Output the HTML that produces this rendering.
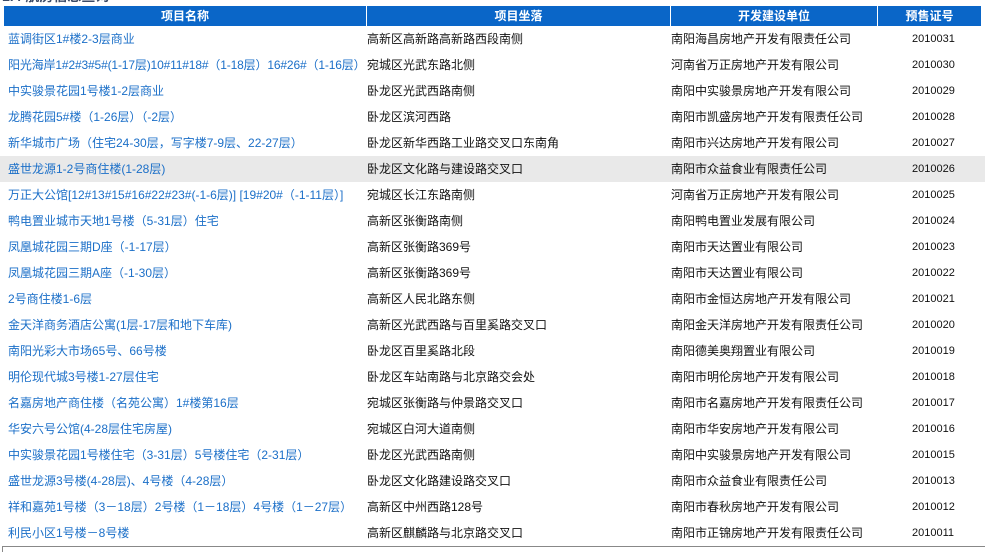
<!DOCTYPE html>
<html><head><meta charset="utf-8"><style>
body{margin:0;width:985px;height:558px;background:#fff;overflow:hidden;position:relative;font-family:"Liberation Sans","Noto Sans CJK SC","WenQuanYi Zen Hei",sans-serif;font-size:12px}
.t{position:absolute;left:0;top:-11px;font-size:14px;font-weight:bold;color:#3b4a66;line-height:14px;padding-left:2px}
.h{position:absolute;top:6px;height:20px;background:#0a66c8;color:#fff;font-weight:bold;font-size:12px;line-height:20px;text-align:center}
.r{position:absolute;left:0;width:985px;height:26px;line-height:26px;white-space:nowrap}
.r div{position:absolute;top:0}
.c1{left:8px;color:#1b6fc8}
.c2{left:367px;color:#111}
.c3{left:671px;color:#111}
.c4{left:912px;color:#111;font-size:11px}
.g{background:#e9e9e9}
</style></head><body>
<div class="t">1.4 航房信息查询</div>
<div class="h" style="left:4px;width:362px">项目名称</div>
<div class="h" style="left:367px;width:303px">项目坐落</div>
<div class="h" style="left:671px;width:206px">开发建设单位</div>
<div class="h" style="left:878px;width:103px">预售证号</div>

<div class="r" style="top:26px"><div class="c1">蓝调街区1#楼2-3层商业</div><div class="c2">高新区高新路高新路西段南侧</div><div class="c3">南阳海昌房地产开发有限责任公司</div><div class="c4">2010031</div></div>
<div class="r" style="top:52px"><div class="c1" style="letter-spacing:-0.15px">阳光海岸1#2#3#5#(1-17层)10#11#18#（1-18层）16#26#（1-16层）</div><div class="c2">宛城区光武东路北侧</div><div class="c3">河南省万正房地产开发有限公司</div><div class="c4">2010030</div></div>
<div class="r" style="top:78px"><div class="c1">中实骏景花园1号楼1-2层商业</div><div class="c2">卧龙区光武西路南侧</div><div class="c3">南阳中实骏景房地产开发有限公司</div><div class="c4">2010029</div></div>
<div class="r" style="top:104px"><div class="c1">龙腾花园5#楼（1-26层）（-2层）</div><div class="c2">卧龙区滨河西路</div><div class="c3">南阳市凯盛房地产开发有限责任公司</div><div class="c4">2010028</div></div>
<div class="r" style="top:130px"><div class="c1">新华城市广场（住宅24-30层，写字楼7-9层、22-27层）</div><div class="c2">卧龙区新华西路工业路交叉口东南角</div><div class="c3">南阳市兴达房地产开发有限公司</div><div class="c4">2010027</div></div>
<div class="r g" style="top:156px"><div class="c1">盛世龙源1-2号商住楼(1-28层)</div><div class="c2">卧龙区文化路与建设路交叉口</div><div class="c3">南阳市众益食业有限责任公司</div><div class="c4">2010026</div></div>
<div class="r" style="top:182px"><div class="c1">万正大公馆[12#13#15#16#22#23#(-1-6层)] [19#20#（-1-11层）]</div><div class="c2">宛城区长江东路南侧</div><div class="c3">河南省万正房地产开发有限公司</div><div class="c4">2010025</div></div>
<div class="r" style="top:208px"><div class="c1">鸭电置业城市天地1号楼（5-31层）住宅</div><div class="c2">高新区张衡路南侧</div><div class="c3">南阳鸭电置业发展有限公司</div><div class="c4">2010024</div></div>
<div class="r" style="top:234px"><div class="c1">凤凰城花园三期D座（-1-17层）</div><div class="c2">高新区张衡路369号</div><div class="c3">南阳市天达置业有限公司</div><div class="c4">2010023</div></div>
<div class="r" style="top:260px"><div class="c1">凤凰城花园三期A座（-1-30层）</div><div class="c2">高新区张衡路369号</div><div class="c3">南阳市天达置业有限公司</div><div class="c4">2010022</div></div>
<div class="r" style="top:286px"><div class="c1">2号商住楼1-6层</div><div class="c2">高新区人民北路东侧</div><div class="c3">南阳市金恒达房地产开发有限公司</div><div class="c4">2010021</div></div>
<div class="r" style="top:312px"><div class="c1">金天洋商务酒店公寓(1层-17层和地下车库)</div><div class="c2">高新区光武西路与百里奚路交叉口</div><div class="c3">南阳金天洋房地产开发有限责任公司</div><div class="c4">2010020</div></div>
<div class="r" style="top:338px"><div class="c1">南阳光彩大市场65号、66号楼</div><div class="c2">卧龙区百里奚路北段</div><div class="c3">南阳德美奥翔置业有限公司</div><div class="c4">2010019</div></div>
<div class="r" style="top:364px"><div class="c1">明伦现代城3号楼1-27层住宅</div><div class="c2">卧龙区车站南路与北京路交会处</div><div class="c3">南阳市明伦房地产开发有限公司</div><div class="c4">2010018</div></div>
<div class="r" style="top:390px"><div class="c1">名嘉房地产商住楼（名苑公寓）1#楼第16层</div><div class="c2">宛城区张衡路与仲景路交叉口</div><div class="c3">南阳市名嘉房地产开发有限责任公司</div><div class="c4">2010017</div></div>
<div class="r" style="top:416px"><div class="c1">华安六号公馆(4-28层住宅房屋)</div><div class="c2">宛城区白河大道南侧</div><div class="c3">南阳市华安房地产开发有限公司</div><div class="c4">2010016</div></div>
<div class="r" style="top:442px"><div class="c1">中实骏景花园1号楼住宅（3-31层）5号楼住宅（2-31层）</div><div class="c2">卧龙区光武西路南侧</div><div class="c3">南阳中实骏景房地产开发有限公司</div><div class="c4">2010015</div></div>
<div class="r" style="top:468px"><div class="c1">盛世龙源3号楼(4-28层)、4号楼（4-28层）</div><div class="c2">卧龙区文化路建设路交叉口</div><div class="c3">南阳市众益食业有限责任公司</div><div class="c4">2010013</div></div>
<div class="r" style="top:494px"><div class="c1">祥和嘉苑1号楼（3－18层）2号楼（1－18层）4号楼（1－27层）</div><div class="c2">高新区中州西路128号</div><div class="c3">南阳市春秋房地产开发有限公司</div><div class="c4">2010012</div></div>
<div class="r" style="top:520px"><div class="c1">利民小区1号楼－8号楼</div><div class="c2">高新区麒麟路与北京路交叉口</div><div class="c3">南阳市正锦房地产开发有限责任公司</div><div class="c4">2010011</div></div>
<div style="position:absolute;left:2px;top:546px;width:983px;height:1px;background:#888"></div>
<div style="position:absolute;left:2px;top:546px;width:1px;height:6px;background:#888"></div>
</body></html>
